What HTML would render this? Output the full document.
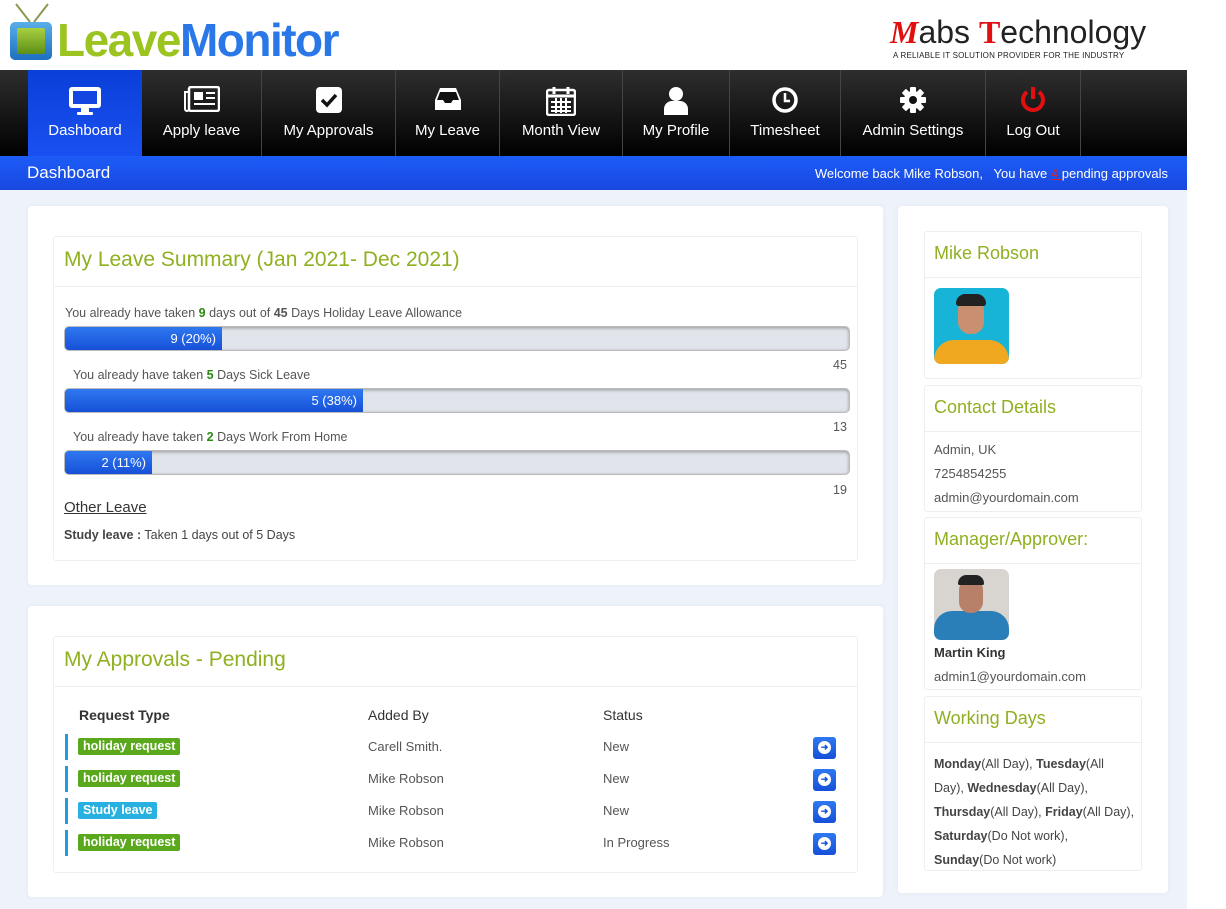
<!DOCTYPE html>
<html><head><meta charset="utf-8"><style>
*{margin:0;padding:0;box-sizing:border-box}
body{width:1226px;height:909px;overflow:hidden;background:#fff;font-family:"Liberation Sans",sans-serif;position:relative;color:#444}
.abs{position:absolute}
.nav{left:0;top:70px;width:1187px;height:86px;background:linear-gradient(#2e2e2e,#000)}
.ni{position:absolute;top:0;height:86px;border-right:1px solid #444;color:#fff;font-size:15px;text-align:center}
.ni .lb{position:absolute;left:0;right:0;top:52px}
.ni svg{position:absolute;left:50%;top:16px;transform:translateX(-50%)}
.bar{left:0;top:156px;width:1187px;height:34px;background:linear-gradient(#1d5cf7,#1848e0);color:#fff}
.bg{left:0;top:190px;width:1187px;height:719px;background:#eef3fb}
.card{background:#fff;border-radius:4px;box-shadow:0 0 6px rgba(0,0,0,.05)}
.box{border:1px solid #eceff3;border-radius:3px;background:#fff}
.ttl{color:#8fb020;font-size:21px}
.pb{left:64px;width:786px;height:25px;border-radius:5px;background:#e1e4ea;box-shadow:inset 0 1px 3px rgba(0,0,0,.35);border:1px solid #bbb;overflow:hidden}
.pb div{height:100%;background:linear-gradient(#2f78f0,#1650d8);color:#fff;font-size:13px;text-align:right;padding-right:6px;line-height:23px}
.sm{font-size:12.5px;color:#555}
.g{color:#2a8a14;font-weight:bold}
.tag{position:absolute;left:78px;height:17px;line-height:17px;padding:0 5px;color:#fff;font-size:12.5px;font-weight:bold;border-radius:2px;background:#5aa81c}
.lbar{position:absolute;left:65px;width:3px;height:26px;background:#1a9ee0}
.btn{position:absolute;left:813px;width:23px;height:22px;border-radius:3px;background:linear-gradient(#2f78f0,#1650d8)}
.btn:after{content:"➜";position:absolute;left:5px;top:4px;width:13px;height:13px;border-radius:50%;background:#fff;color:#1650d8;font-size:9px;line-height:13px;text-align:center;font-weight:bold}
.rt{font-size:13px;color:#555}
</style></head><body>
<div class="abs" style="left:10px;top:22px;width:42px;height:38px;border-radius:5px;background:linear-gradient(#5aaee8,#1d6fc0);"></div>
<div class="abs" style="left:17px;top:28px;width:28px;height:26px;background:linear-gradient(#a8d040,#5d8f18);border-radius:2px"></div>
<svg class="abs" style="left:12px;top:2px" width="40" height="24"><path d="M4 2 L18 20 M36 2 L22 20" stroke="#8a9a50" stroke-width="2"/></svg>
<div class="abs" style="left:57px;top:14px;font-size:46px;font-weight:bold;letter-spacing:-1.5px;line-height:52px"><span style="color:#9cc420">Leave</span><span style="color:#2a78e8">Monitor</span></div>
<div class="abs" style="left:890px;top:13px;font-size:32px;line-height:38px;color:#222"><span style="color:#e01010;font-family:'Liberation Serif',serif;font-weight:bold;font-style:italic">M</span>abs <span style="color:#e01010;font-family:'Liberation Serif',serif;font-weight:bold">T</span>echnology</div>
<div class="abs" style="left:893px;top:51px;font-size:8px;color:#222;letter-spacing:.2px">A RELIABLE IT SOLUTION PROVIDER FOR THE INDUSTRY</div>

<div class="abs nav">
<div class="ni" style="left:28px;width:114px;background:linear-gradient(#0a3fd8,#1a50f0);border:none"><svg width="34" height="30" viewBox="0 0 34 30"><rect x="1" y="1" width="32" height="21" rx="3" fill="#fff"/><rect x="5" y="5" width="24" height="13" fill="#1545e0"/><rect x="13" y="22" width="8" height="4" fill="#fff"/><rect x="9" y="26" width="16" height="3" rx="1" fill="#fff"/></svg><div class="lb">Dashboard</div></div>
<div class="ni" style="left:142px;width:120px"><svg width="36" height="26" viewBox="0 0 36 26"><rect x="5" y="1" width="30" height="24" rx="2" fill="none" stroke="#fff" stroke-width="2.5"/><path d="M5 6 H1 V23 a2 2 0 0 0 4 0" fill="none" stroke="#fff" stroke-width="2"/><rect x="10" y="6" width="9" height="8" fill="#fff"/><path d="M22 7h9M22 12h9M10 18h21" stroke="#fff" stroke-width="2"/></svg><div class="lb">Apply leave</div></div>
<div class="ni" style="left:262px;width:134px"><svg width="28" height="28" viewBox="0 0 28 28"><rect x="1" y="1" width="26" height="26" rx="4" fill="#fff"/><path d="M7 14 l5 5 l9 -10" stroke="#111" stroke-width="3.5" fill="none"/></svg><div class="lb">My Approvals</div></div>
<div class="ni" style="left:396px;width:104px"><svg width="28" height="26" viewBox="0 0 28 26"><path d="M6 2 H22 L27 14 V24 H1 V14 Z" fill="#fff"/><path d="M6 6 H22 L25 14 H19 L17 17 H11 L9 14 H3 Z" fill="#111"/></svg><div class="lb">My Leave</div></div>
<div class="ni" style="left:500px;width:123px"><svg width="30" height="30" viewBox="0 0 30 30"><rect x="1" y="4" width="28" height="25" rx="2" fill="none" stroke="#fff" stroke-width="2.5"/><path d="M1 10 H29" stroke="#fff" stroke-width="3"/><path d="M8 1v7M22 1v7" stroke="#fff" stroke-width="3"/><path d="M5 16H25M5 21H25M5 25H25M10 12V27M15 12V27M20 12V27" stroke="#fff" stroke-width="2"/></svg><div class="lb">Month View</div></div>
<div class="ni" style="left:623px;width:107px"><svg width="26" height="30" viewBox="0 0 26 30"><circle cx="13" cy="8" r="7" fill="#fff"/><path d="M1 29 V23 a8 8 0 0 1 8 -8 H17 a8 8 0 0 1 8 8 V29 Z" fill="#fff"/></svg><div class="lb">My Profile</div></div>
<div class="ni" style="left:730px;width:111px"><svg width="28" height="28" viewBox="0 0 28 28"><circle cx="14" cy="14" r="11" fill="none" stroke="#fff" stroke-width="3.5"/><path d="M14 7 V15 H19" stroke="#fff" stroke-width="2.5" fill="none"/></svg><div class="lb">Timesheet</div></div>
<div class="ni" style="left:841px;width:145px"><svg width="28" height="28" viewBox="0 0 28 28"><g fill="#fff"><circle cx="14" cy="14" r="9"/><rect x="11" y="1" width="6" height="26" rx="1"/><rect x="11" y="1" width="6" height="26" rx="1" transform="rotate(45 14 14)"/><rect x="11" y="1" width="6" height="26" rx="1" transform="rotate(90 14 14)"/><rect x="11" y="1" width="6" height="26" rx="1" transform="rotate(135 14 14)"/></g><circle cx="14" cy="14" r="4" fill="#111"/></svg><div class="lb">Admin Settings</div></div>
<div class="ni" style="left:986px;width:95px"><svg width="28" height="28" viewBox="0 0 28 28"><path d="M8 6 a10 10 0 1 0 12 0" fill="none" stroke="#e01010" stroke-width="4"/><path d="M14 1 V13" stroke="#e01010" stroke-width="4"/></svg><div class="lb">Log Out</div></div>
</div>
<div class="abs bar"><div class="abs" style="left:27px;top:7px;font-size:17px">Dashboard</div><div class="abs" style="right:19px;top:10px;font-size:13px">Welcome back Mike Robson, &nbsp; You have <span style="color:#e02020;text-decoration:underline">4 </span>pending approvals</div></div>
<div class="abs bg"></div>

<div class="abs card" style="left:28px;top:206px;width:855px;height:379px"></div>
<div class="abs box" style="left:53px;top:236px;width:805px;height:325px"></div>
<div class="abs" style="left:54px;top:286px;width:803px;height:1px;background:#eceff3"></div>
<div class="abs ttl" style="left:64px;top:248px">My Leave Summary (Jan 2021- Dec 2021)</div>
<div class="abs sm" style="left:65px;top:306px">You already have taken <span class="g">9</span> days out of <b>45</b> Days Holiday Leave Allowance</div>
<div class="abs pb" style="top:326px"><div style="width:157px">9 (20%)</div></div>
<div class="abs sm" style="left:833px;top:358px">45</div>
<div class="abs sm" style="left:73px;top:368px">You already have taken <span class="g">5</span> Days Sick Leave</div>
<div class="abs pb" style="top:388px"><div style="width:298px">5 (38%)</div></div>
<div class="abs sm" style="left:833px;top:420px">13</div>
<div class="abs sm" style="left:73px;top:430px">You already have taken <span class="g">2</span> Days Work From Home</div>
<div class="abs pb" style="top:450px"><div style="width:87px">2 (11%)</div></div>
<div class="abs sm" style="left:833px;top:483px">19</div>
<div class="abs" style="left:64px;top:499px;font-size:15px;color:#333;text-decoration:underline">Other Leave</div>
<div class="abs sm" style="left:64px;top:528px;color:#444"><b>Study leave :</b> Taken 1 days out of 5 Days</div>

<div class="abs card" style="left:28px;top:606px;width:855px;height:291px"></div>
<div class="abs box" style="left:53px;top:636px;width:805px;height:237px"></div>
<div class="abs" style="left:54px;top:686px;width:803px;height:1px;background:#eceff3"></div>
<div class="abs ttl" style="left:64px;top:648px">My Approvals - Pending</div>
<div class="abs" style="left:79px;top:707px;font-size:14px;color:#333;font-weight:bold">Request Type</div>
<div class="abs" style="left:368px;top:707px;font-size:14px;color:#333">Added By</div>
<div class="abs" style="left:603px;top:707px;font-size:14px;color:#333">Status</div>
<div class="lbar" style="top:734px"></div><div class="tag" style="top:738px">holiday request</div><div class="abs rt" style="left:368px;top:739px">Carell Smith.</div><div class="abs rt" style="left:603px;top:739px">New</div><div class="btn" style="top:737px"></div>
<div class="lbar" style="top:766px"></div><div class="tag" style="top:770px">holiday request</div><div class="abs rt" style="left:368px;top:771px">Mike Robson</div><div class="abs rt" style="left:603px;top:771px">New</div><div class="btn" style="top:769px"></div>
<div class="lbar" style="top:798px"></div><div class="tag" style="top:802px;background:#27b0e0">Study leave</div><div class="abs rt" style="left:368px;top:803px">Mike Robson</div><div class="abs rt" style="left:603px;top:803px">New</div><div class="btn" style="top:801px"></div>
<div class="lbar" style="top:830px"></div><div class="tag" style="top:834px">holiday request</div><div class="abs rt" style="left:368px;top:835px">Mike Robson</div><div class="abs rt" style="left:603px;top:835px">In Progress</div><div class="btn" style="top:833px"></div>

<div class="abs card" style="left:898px;top:206px;width:270px;height:687px"></div>
<div class="abs box" style="left:924px;top:231px;width:218px;height:148px"></div>
<div class="abs" style="left:925px;top:277px;width:216px;height:1px;background:#eceff3"></div>
<div class="abs ttl" style="left:934px;top:243px;font-size:18px">Mike Robson</div>
<div class="abs" style="left:934px;top:288px;width:75px;height:76px;border-radius:7px;background:#18b4d8;overflow:hidden"><div class="abs" style="left:0;top:52px;width:75px;height:30px;background:#f0a820;border-radius:20px 20px 0 0"></div><div class="abs" style="left:24px;top:10px;width:26px;height:36px;border-radius:12px;background:#c89070"></div><div class="abs" style="left:22px;top:6px;width:30px;height:12px;border-radius:10px 10px 3px 3px;background:#222"></div></div>
<div class="abs box" style="left:924px;top:385px;width:218px;height:127px"></div>
<div class="abs" style="left:925px;top:431px;width:216px;height:1px;background:#eceff3"></div>
<div class="abs ttl" style="left:934px;top:397px;font-size:18px">Contact Details</div>
<div class="abs rt" style="left:934px;top:442px">Admin, UK</div>
<div class="abs rt" style="left:934px;top:466px">7254854255</div>
<div class="abs rt" style="left:934px;top:490px">admin@yourdomain.com</div>
<div class="abs box" style="left:924px;top:517px;width:218px;height:173px"></div>
<div class="abs" style="left:925px;top:563px;width:216px;height:1px;background:#eceff3"></div>
<div class="abs ttl" style="left:934px;top:529px;font-size:18px">Manager/Approver:</div>
<div class="abs" style="left:934px;top:569px;width:75px;height:71px;border-radius:7px;background:#d8d4d0;overflow:hidden"><div class="abs" style="left:0;top:42px;width:75px;height:32px;background:#2a7fb8;border-radius:18px 18px 0 0"></div><div class="abs" style="left:25px;top:10px;width:24px;height:34px;border-radius:11px;background:#b88068"></div><div class="abs" style="left:24px;top:6px;width:26px;height:10px;border-radius:10px 10px 2px 2px;background:#222"></div></div>
<div class="abs" style="left:934px;top:645px;font-size:13px;color:#333;font-weight:bold">Martin King</div>
<div class="abs rt" style="left:934px;top:669px">admin1@yourdomain.com</div>
<div class="abs box" style="left:924px;top:696px;width:218px;height:175px"></div>
<div class="abs" style="left:925px;top:742px;width:216px;height:1px;background:#eceff3"></div>
<div class="abs ttl" style="left:934px;top:708px;font-size:18px">Working Days</div>
<div class="abs" style="left:934px;top:752px;width:215px;font-size:12.5px;line-height:24px;color:#444;white-space:nowrap"><b>Monday</b>(All Day), <b>Tuesday</b>(All<br>Day), <b>Wednesday</b>(All Day),<br><b>Thursday</b>(All Day), <b>Friday</b>(All Day),<br><b>Saturday</b>(Do Not work),<br><b>Sunday</b>(Do Not work)</div>
</body></html>
